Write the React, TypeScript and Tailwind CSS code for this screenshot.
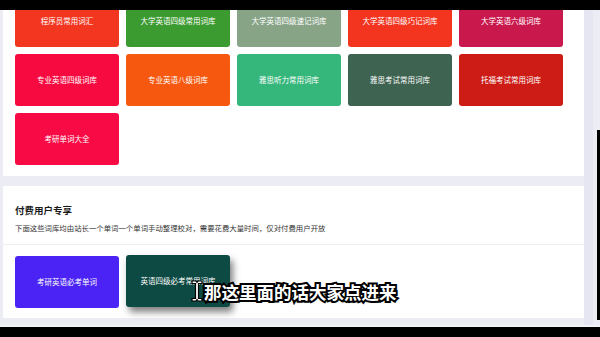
const freeBooks = [
  { name: "程序员常用词汇", color: "bg-[#f2361f]" },
  { name: "大学英语四级常用词库", color: "bg-[#3b9a30]" },
  { name: "大学英语四级速记词库", color: "bg-[#87a487]" },
  { name: "大学英语四级巧记词库", color: "bg-[#f3341f]" },
  { name: "大学英语六级词库", color: "bg-[#c9184c]" },
  { name: "专业英语四级词库", color: "bg-[#f70a40]" },
  { name: "专业英语八级词库", color: "bg-[#f6580f]" },
  { name: "雅思听力常用词库", color: "bg-[#35b67a]" },
  { name: "雅思考试常用词库", color: "bg-[#3e6351]" },
  { name: "托福考试常用词库", color: "bg-[#cd1c15]" },
  { name: "考研单词大全", color: "bg-[#f80a45]" },
];

const paidBooks = [
  { name: "考研英语必考单词", color: "bg-[#4b23f4]", hover: false },
  { name: "英语四级必考常用词库", color: "bg-[#0d4a43]", hover: true },
];

function BookCard({ name, color, hover }: { name: string; color: string; hover?: boolean }) {
  return (
    <div
      className={`h-[52px] rounded-[3px] flex items-center justify-center text-white text-[7.5px] ${color} ${
        hover ? "shadow-[3px_5px_7px_rgba(0,0,0,0.5)] -translate-y-px" : ""
      }`}
    >
      {name}
    </div>
  );
}

export default function App() {
  return (
    <div
      className="w-[600px] h-[337px] overflow-hidden bg-black flex flex-col"
      style={{ fontFamily: '"Noto Sans CJK SC", "Noto Sans", sans-serif' }}
    >
      {/* top bar */}
      <div className="h-[10px] shrink-0 bg-black" />

      <div className="relative h-[315px] shrink-0 bg-[#ececf5] flex overflow-hidden">
        {/* page */}
        <div className="w-[584px] shrink-0 pl-[3px] flex flex-col gap-[10px] -mt-[15px]">
          {/* free word books */}
          <div className="bg-white pl-[12px] pr-[22px] pb-[11px]">
            <div className="grid grid-cols-[repeat(5,104px)] gap-x-[7px] gap-y-[7px]">
              {freeBooks.map((b) => (
                <BookCard key={b.name} name={b.name} color={b.color} />
              ))}
            </div>
          </div>

          {/* paid section */}
          <div className="bg-white">
            <div className="px-[12px] pt-[16px] pb-[10px] border-b border-[#eeeef2]">
              <h2 className="text-[9.5px] leading-[16px] font-bold text-[#1a1a1a]">付费用户专享</h2>
              <p className="mt-[4px] text-[7.4px] leading-[12px] text-[#333]">
                下面这些词库均由站长一个单词一个单词手动整理校对，需要花费大量时间，仅对付费用户开放
              </p>
            </div>
            <div className="pl-[12px] pt-[11px] pb-[10px] grid grid-cols-[repeat(5,104px)] gap-x-[7px]">
              {paidBooks.map((b) => (
                <BookCard key={b.name} name={b.name} color={b.color} hover={b.hover} />
              ))}
            </div>
          </div>
        </div>

        {/* scroll track */}
        <div className="flex-1 flex">
          <div className="w-[9px] bg-[#e6e6f2]" />
          <div className="flex-1 flex flex-col items-end">
            <div className="h-[120px]" />
            <div className="w-[3px] flex-1 bg-black mb-[5px]" />
          </div>
        </div>

        {/* cursor */}
        <svg className="absolute left-[191px] top-[270px]" width="12" height="22" viewBox="0 0 12 22">
          <path
            d="M1 1h4l1 1.5L7 1h4v2.5H7.5v15H11V21H7l-1-1.5L5 21H1v-2.5h3.5v-15H1z"
            fill="#fff"
            stroke="#000"
            strokeWidth="1.2"
          />
        </svg>

        {/* subtitle */}
        <div className="absolute left-[204px] top-[271px] text-[17.5px] leading-[22px] font-bold text-white [-webkit-text-stroke:4px_#000] [paint-order:stroke_fill]">
          那这里面的话大家点进来
        </div>
      </div>

      {/* bottom bar */}
      <div className="h-[2px] bg-[#f4f4f8]" />
      <div className="flex-1 bg-black" />
    </div>
  );
}
